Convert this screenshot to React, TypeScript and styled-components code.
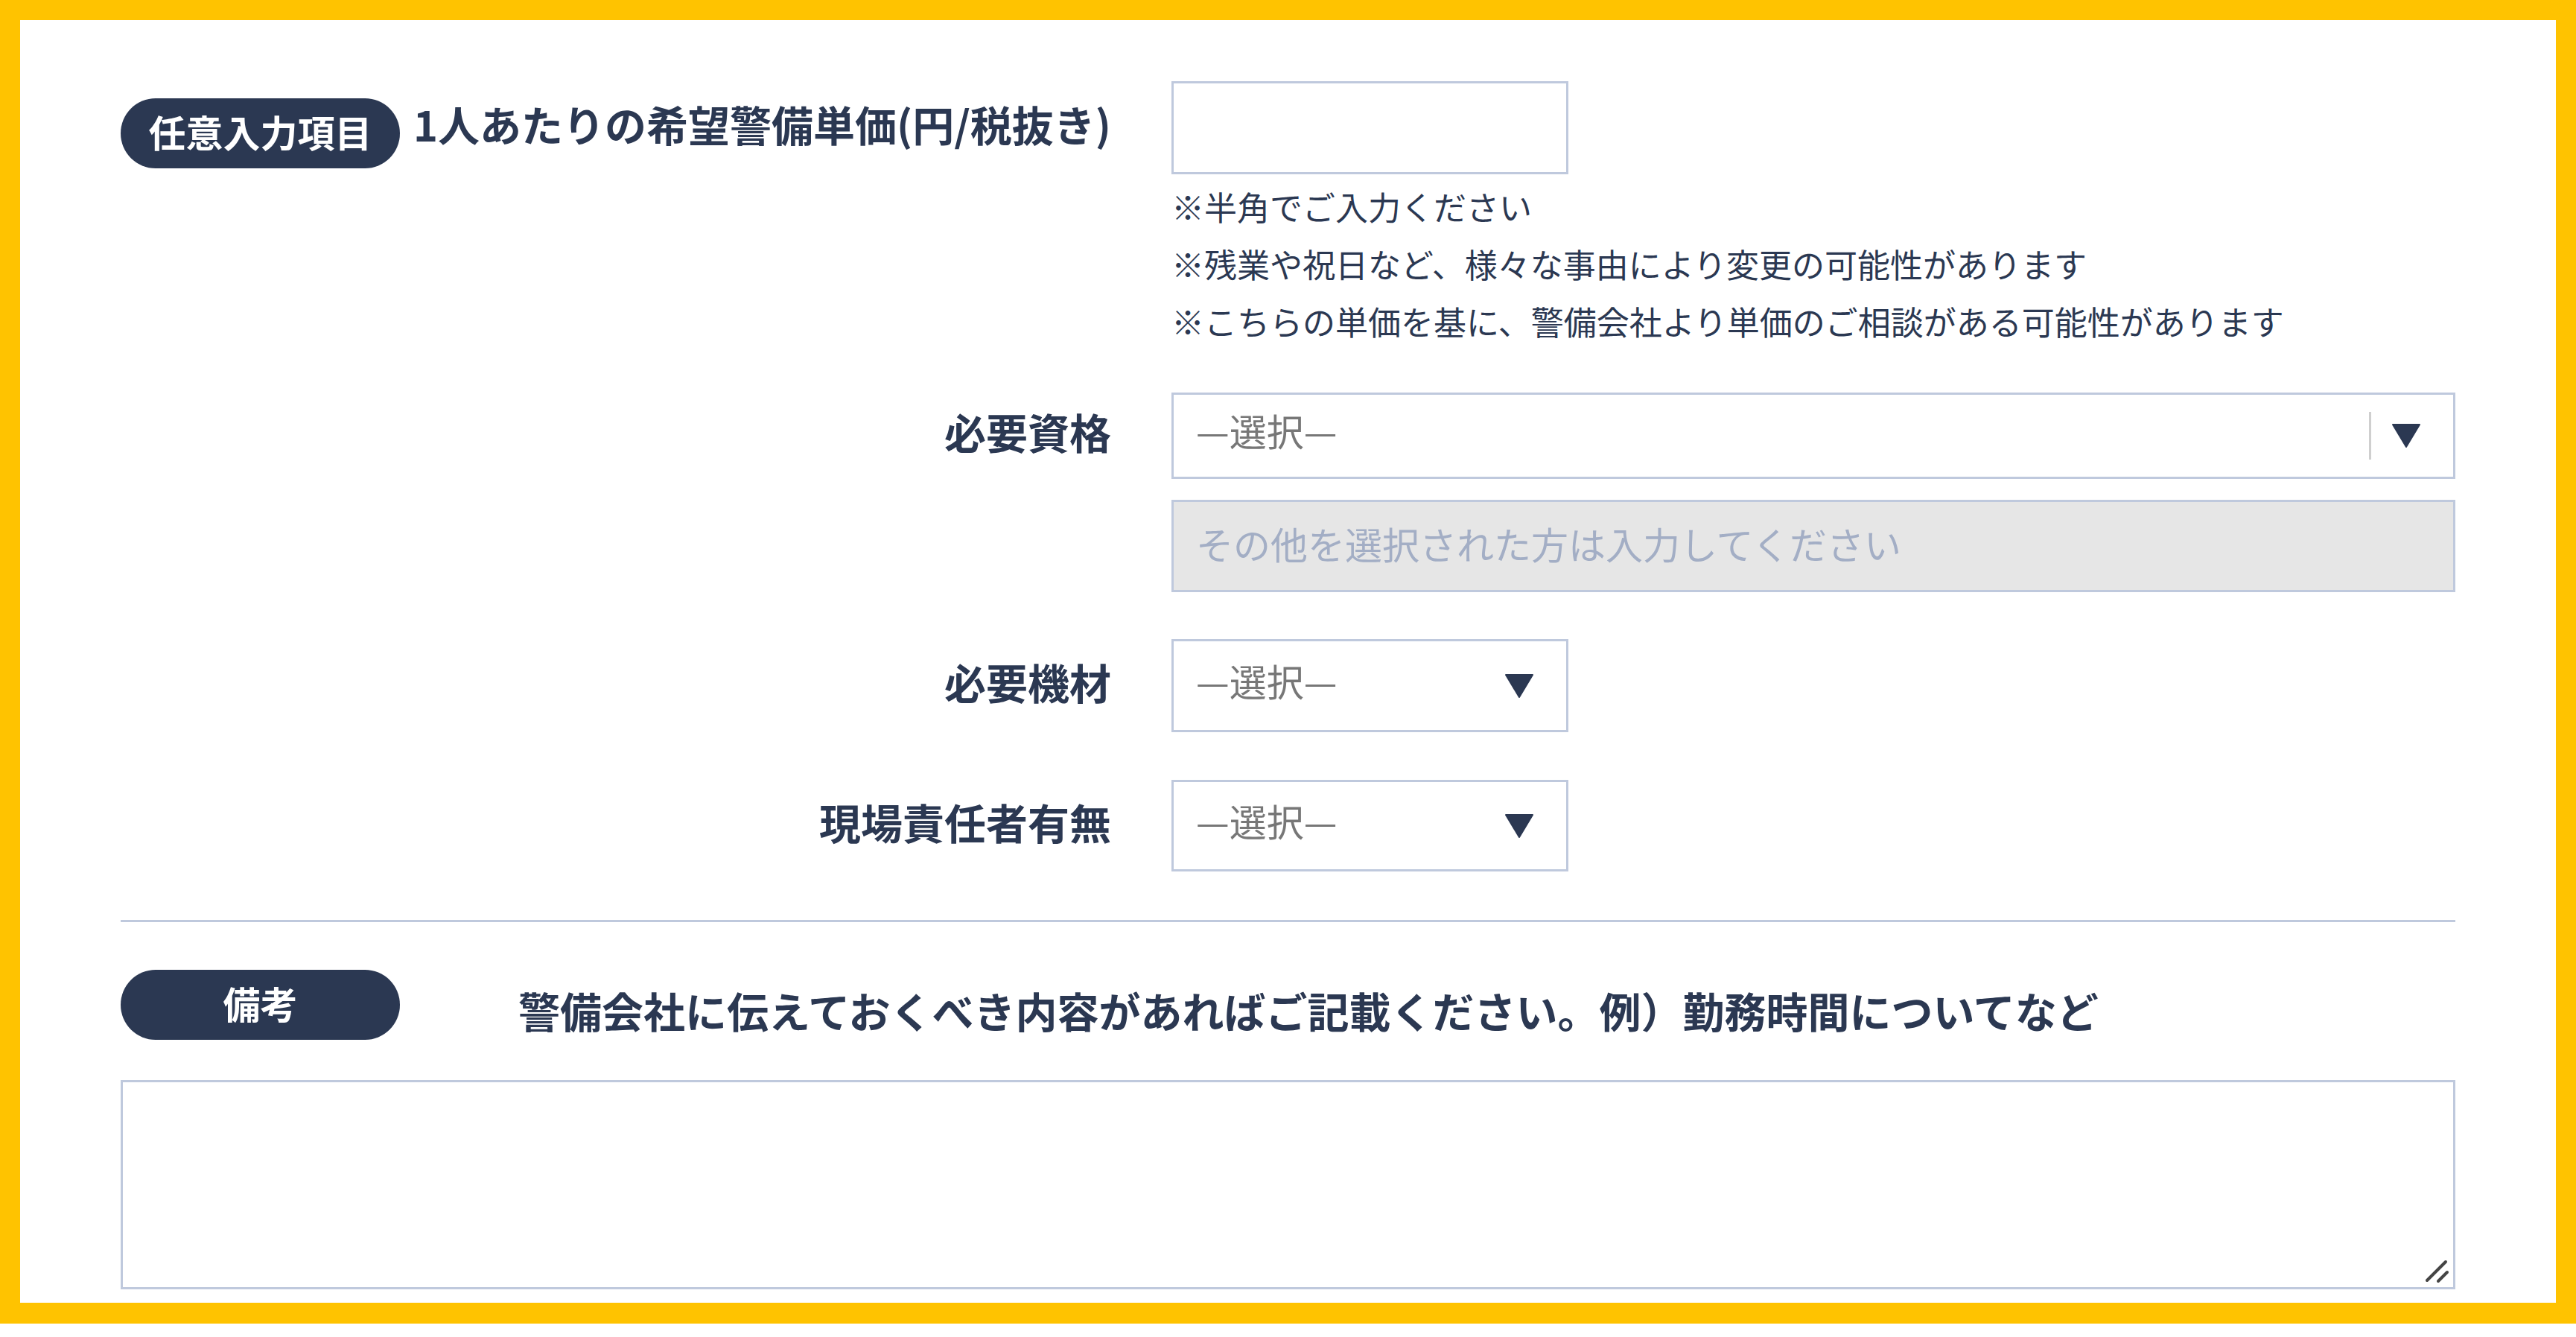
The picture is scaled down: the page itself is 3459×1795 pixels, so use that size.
import styled, { createGlobalStyle } from "styled-components";

const navy = "#2b3852";
const line = "#bfc9dd";

const GlobalStyle = createGlobalStyle`
    body {
        margin: 0;
        background: #fff;
        font-family: "Noto Sans CJK JP", "Noto Sans", sans-serif;
        color: ${navy};
    }
    * { box-sizing: border-box; }
`;

const Frame = styled.div`
    width: 3459px;
    border: 27px solid #ffc300;
    border-bottom-width: 28px;
    background: #fff;
    padding: 82px 135px 18px;
`;

const FieldRow = styled.div<{ $top?: number }>`
    display: grid;
    grid-template-columns: 1330px 1724px;
    column-gap: 81px;
    align-items: start;
    margin-top: ${(p) => p.$top ?? 0}px;
`;

const LabelCell = styled.div<{ $h: number; $split?: boolean }>`
    height: ${(p) => p.$h}px;
    display: flex;
    align-items: center;
    justify-content: ${(p) => (p.$split ? "space-between" : "flex-end")};
`;

const Badge = styled.span<{ $shift?: number }>`
    width: 375px;
    height: 94px;
    border-radius: 47px;
    background: ${navy};
    color: #fff;
    font-size: 50px;
    font-weight: 700;
    display: flex;
    align-items: center;
    justify-content: center;
    padding-bottom: 6px;
    margin-top: ${(p) => p.$shift ?? 0}px;
    flex-shrink: 0;
`;

const LabelText = styled.span`
    font-size: 56px;
    font-weight: 700;
    line-height: 1;
    color: ${navy};
    white-space: nowrap;
    margin-bottom: 12px;
`;

const FieldCell = styled.div`
    display: flex;
    flex-direction: column;
    gap: 28px;
`;

const TextInput = styled.input<{ $w: number; $h: number }>`
    width: ${(p) => p.$w}px;
    height: ${(p) => p.$h}px;
    border: 3px solid ${line};
    border-radius: 0;
    background: #fff;
    padding: 0 30px 8px;
    font: 400 50px "Noto Sans CJK JP", sans-serif;
    color: ${navy};
    outline: none;
    &:disabled {
        background: #e6e6e6;
    }
    &::placeholder {
        color: #a3aec5;
    }
`;

const Notes = styled.div`
    margin-top: -23px;
    font-size: 44px;
    line-height: 77px;
    color: ${navy};
`;

const SelectBox = styled.div<{ $w: number; $h: number }>`
    width: ${(p) => p.$w}px;
    height: ${(p) => p.$h}px;
    border: 3px solid ${line};
    background: #fff;
    display: flex;
    align-items: center;
    padding: 0 44px 0 30px;
    font-size: 50px;
    color: #777;
    cursor: pointer;
`;

const SelectValue = styled.span`
    flex: 1;
    line-height: 1;
    margin-bottom: 16px;
`;

const Separator = styled.span`
    width: 3px;
    height: 64px;
    background: #cfcfcf;
    margin-right: 28px;
`;

const Divider = styled.hr`
    margin: 65px 0 0;
    border: 0;
    border-top: 3px solid ${line};
`;

const RemarksHead = styled.div`
    display: flex;
    align-items: center;
    margin-top: 64px;
`;

const RemarksText = styled(LabelText)`
    margin-left: 159px;
    margin-top: 14px;
    margin-bottom: 0;
`;

const AreaWrap = styled.div`
    position: relative;
    margin-top: 54px;
`;

const Area = styled.textarea`
    display: block;
    width: 100%;
    height: 281px;
    border: 3px solid ${line};
    resize: none;
    outline: none;
    font: 400 44px "Noto Sans CJK JP", sans-serif;
    padding: 20px 30px;
`;

const Grip = styled.svg`
    position: absolute;
    right: 8px;
    bottom: 8px;
`;

function Arrow() {
    return (
        <svg width="38" height="32" viewBox="0 0 38 32">
            <polygon points="1,1 37,1 19,31" fill={navy} stroke={navy} strokeWidth="2" strokeLinejoin="round" />
        </svg>
    );
}

function Select({ w, h, divided }: { w: number; h: number; divided?: boolean }) {
    return (
        <SelectBox $w={w} $h={h}>
            <SelectValue>—選択—</SelectValue>
            {divided && <Separator />}
            <Arrow />
        </SelectBox>
    );
}

export default function App() {
    return (
        <>
            <GlobalStyle />
            <Frame>
                <FieldRow>
                    <LabelCell $h={125} $split>
                        <Badge $shift={14}>任意入力項目</Badge>
                        <LabelText>1人あたりの希望警備単価(円/税抜き)</LabelText>
                    </LabelCell>
                    <FieldCell>
                        <TextInput $w={533} $h={125} type="text" />
                        <Notes>
                            <div>※半角でご入力ください</div>
                            <div>※残業や祝日など、様々な事由により変更の可能性があります</div>
                            <div>※こちらの単価を基に、警備会社より単価のご相談がある可能性があります</div>
                        </Notes>
                    </FieldCell>
                </FieldRow>

                <FieldRow $top={57}>
                    <LabelCell $h={116}>
                        <LabelText>必要資格</LabelText>
                    </LabelCell>
                    <FieldCell>
                        <Select w={1724} h={116} divided />
                        <TextInput $w={1724} $h={124} type="text" disabled placeholder="その他を選択された方は入力してください" />
                    </FieldCell>
                </FieldRow>

                <FieldRow $top={63}>
                    <LabelCell $h={125}>
                        <LabelText>必要機材</LabelText>
                    </LabelCell>
                    <FieldCell>
                        <Select w={533} h={125} />
                    </FieldCell>
                </FieldRow>

                <FieldRow $top={64}>
                    <LabelCell $h={123}>
                        <LabelText>現場責任者有無</LabelText>
                    </LabelCell>
                    <FieldCell>
                        <Select w={533} h={123} />
                    </FieldCell>
                </FieldRow>

                <Divider />

                <RemarksHead>
                    <Badge>備考</Badge>
                    <RemarksText>警備会社に伝えておくべき内容があればご記載ください。例）勤務時間についてなど</RemarksText>
                </RemarksHead>

                <AreaWrap>
                    <Area />
                    <Grip width="34" height="34" viewBox="0 0 34 34">
                        <line x1="4" y1="30" x2="29" y2="5" stroke="#444" strokeWidth="4" strokeLinecap="round" />
                        <line x1="19" y1="31" x2="31" y2="19" stroke="#444" strokeWidth="4" strokeLinecap="round" />
                    </Grip>
                </AreaWrap>
            </Frame>
        </>
    );
}
